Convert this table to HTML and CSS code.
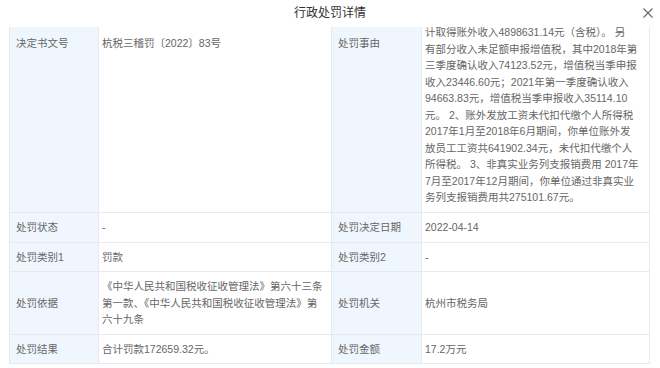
FILE: index.html
```html
<!DOCTYPE html>
<html lang="zh-CN">
<head>
<meta charset="utf-8">
<title>行政处罚详情</title>
<link rel="stylesheet" href="styles.css">
</head>
<body>
<div class="dialog">
  <div class="dialog-header">
    <span class="dialog-title">行政处罚详情</span>
    <button class="close-btn" aria-label="关闭">
      <svg width="10" height="10" viewBox="0 0 10 10"><path d="M0.5 0.5L9.5 9.5M9.5 0.5L0.5 9.5" stroke="#666" stroke-width="1.1" fill="none"/></svg>
    </button>
  </div>
  <div class="dialog-body">
    <table class="detail">
      <colgroup>
        <col class="c-label"><col class="c-value1"><col class="c-label2"><col class="c-value2">
      </colgroup>
      <tr class="row-first">
        <td class="label top">决定书文号</td>
        <td class="value top">杭税三稽罚〔2022〕83号</td>
        <td class="label top">处罚事由</td>
        <td class="value reason"><div class="reason-text lines">计取得账外收入4898631.14元（含税）。 另<br>有部分收入未足额申报增值税，其中2018年第<br>三季度确认收入74123.52元，增值税当季申报<br>收入23446.60元；2021年第一季度确认收入<br>94663.83元，增值税当季申报收入35114.10<br>元。 2、账外发放工资未代扣代缴个人所得税<br>2017年1月至2018年6月期间，你单位账外发<br>放员工工资共641902.34元，未代扣代缴个人<br>所得税。 3、非真实业务列支报销费用 2017年<br>7月至2017年12月期间，你单位通过非真实业<br>务列支报销费用共275101.67元。</div></td>
      </tr>
      <tr>
        <td class="label">处罚状态</td>
        <td class="value">-</td>
        <td class="label">处罚决定日期</td>
        <td class="value">2022-04-14</td>
      </tr>
      <tr>
        <td class="label">处罚类别1</td>
        <td class="value">罚款</td>
        <td class="label">处罚类别2</td>
        <td class="value">-</td>
      </tr>
      <tr>
        <td class="label">处罚依据</td>
        <td class="value"><div class="lines">《中华人民共和国税收征收管理法》第六十三条<br>第一款、《中华人民共和国税收征收管理法》第<br>六十九条</div></td>
        <td class="label">处罚机关</td>
        <td class="value">杭州市税务局</td>
      </tr>
      <tr>
        <td class="label">处罚结果</td>
        <td class="value">合计罚款172659.32元。</td>
        <td class="label">处罚金额</td>
        <td class="value">17.2万元</td>
      </tr>
    </table>
  </div>
</div>
</body>
</html>
```

FILE: styles.css
```css
* { box-sizing: border-box; }
html, body {
  margin: 0;
  padding: 0;
  background: #fff;
}
body {
  width: 660px;
  height: 368px;
  overflow: hidden;
  font-family: "Liberation Sans", "Noto Sans CJK SC", sans-serif;
  color: #666;
}
.dialog {
  display: flex;
  flex-direction: column;
  height: 368px;
}
.dialog-header {
  height: 27px;
  display: flex;
  align-items: center;
  justify-content: center;
  position: relative;
  flex: none;
}
.dialog-title {
  font-size: 12px;
  color: #333;
  line-height: 27px;
}
.close-btn {
  position: absolute;
  right: 7px;
  top: 8px;
  width: 10px;
  height: 10px;
  padding: 0;
  border: 0;
  background: none;
  display: flex;
}
.dialog-body {
  flex: 1;
  overflow: hidden;
  padding: 0 11px 0 9px;
}
.detail {
  width: 640px;
  border-collapse: collapse;
  table-layout: fixed;
  font-size: 10.5px;
  line-height: 16.5px;
}
.c-label { width: 89px; }
.c-value1 { width: 233px; }
.c-label2 { width: 90px; }
.c-value2 { width: 228px; }
.detail td {
  border: 1px solid #e6eaef;
  border-top: 0;
  padding: 6px 2px 6px 3px;
  vertical-align: middle;
}
.detail td.label {
  background: #eff6fd;
  padding-left: 6px;
}
.detail td.top {
  vertical-align: top;
  padding-top: 8px;
}
.detail td.reason {
  vertical-align: top;
  padding-top: 0;
  padding-bottom: 6.5px;
}
.lines {
  white-space: nowrap;
}
.reason-text {
  margin-top: -3px;
}
.row-first td { border-top: 0; }
```
